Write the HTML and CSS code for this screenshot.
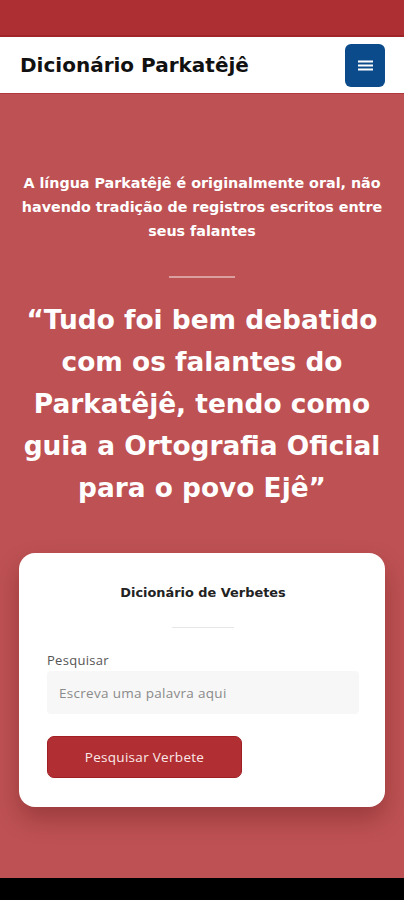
FILE: index.html
```html
<!DOCTYPE html>
<html lang="pt">
<head>
<meta charset="utf-8">
<meta name="viewport" content="width=device-width, initial-scale=1">
<title>Dicionário Parkatêjê</title>
<link rel="stylesheet" href="styles.css">
</head>
<body>
<div class="screen">
  <div class="statusbar"></div>
  <header class="nav">
    <div class="brand">Dicionário Parkatêjê</div>
    <button class="menu-btn" aria-label="Menu">
      <svg width="15" height="11" viewBox="0 0 15 11">
        <rect x="0" y="0.5" width="15" height="2" fill="#ffffff"/>
        <rect x="0" y="4.5" width="15" height="2" fill="#ffffff"/>
        <rect x="0" y="8.5" width="15" height="2" fill="#ffffff"/>
      </svg>
    </button>
  </header>
  <main class="hero">
    <p class="intro">A língua Parkatêjê é originalmente oral, não havendo tradição de registros escritos entre seus falantes</p>
    <div class="divider"></div>
    <h1 class="quote">“Tudo foi bem debatido com os falantes do Parkatêjê, tendo como guia a Ortografia Oficial para o povo Ejê”</h1>
    <section class="card">
      <h2 class="card-title">Dicionário de Verbetes</h2>
      <div class="card-divider"></div>
      <label class="label" for="q">Pesquisar</label>
      <input class="input" id="q" type="text" placeholder="Escreva uma palavra aqui">
      <button class="search-btn">Pesquisar Verbete</button>
    </section>
  </main>
  <div class="navbar-bottom"></div>
</div>
</body>
</html>
```
FILE: styles.css
```css
* { box-sizing: border-box; }
html, body { margin: 0; padding: 0; }
body {
  background: #000;
  font-family: "DejaVu Sans", sans-serif;
}
.screen {
  width: 404px;
  height: 900px;
  display: flex;
  flex-direction: column;
  background: #be5153;
  overflow: hidden;
}
.statusbar {
  height: 37px;
  background: #ad2f34;
  border-bottom: 2px solid #9f2529;
  flex: none;
}
.nav {
  flex: none;
  height: 57px;
  background: #ffffff;
  border-bottom: 1px solid #b03a3e;
  display: flex;
  align-items: center;
  justify-content: space-between;
  padding: 0 19px 0 20px;
}
.brand {
  font-family: "DejaVu Sans", sans-serif;
  font-weight: bold;
  font-size: 20px;
  color: #111;
}
.menu-btn {
  width: 40px;
  height: 43px;
  border: none;
  border-radius: 6px;
  background: #0b4b8b;
  display: flex;
  align-items: center;
  justify-content: center;
  padding: 0;
}
.hero {
  flex: 1;
  display: flex;
  flex-direction: column;
  align-items: center;
  padding: 77px 10px 0 10px;
}
.intro {
  margin: 0;
  color: #fff;
  font-weight: bold;
  font-size: 14.3px;
  line-height: 24px;
  text-align: center;
}
.divider {
  width: 66px;
  height: 2px;
  background: rgba(255,255,255,0.45);
  margin-top: 33px;
}
.quote {
  margin: 21px 0 0 0;
  padding: 0 9px;
  color: #fff;
  font-weight: bold;
  font-size: 26.4px;
  line-height: 42px;
  text-align: center;
}
.card {
  margin-top: 44px;
  width: 366px;
  background: #fff;
  border-radius: 16px;
  box-shadow: 0 12px 24px rgba(60, 0, 0, 0.28);
  padding: 31px 26px 29px 28px;
  display: flex;
  flex-direction: column;
  align-items: flex-start;
}
.card-title {
  align-self: center;
  margin: 0;
  font-size: 12.9px;
  line-height: 18px;
  font-weight: bold;
  color: #222;
}
.card-divider {
  align-self: center;
  width: 62px;
  height: 1px;
  background: #e6e6e6;
  margin-top: 25px;
}
.label {
  margin-top: 24px;
  font-family: "Open Sans", sans-serif;
  font-size: 13px;
  letter-spacing: 0.3px;
  line-height: 17px;
  color: #555;
}
.input {
  margin-top: 2px;
  width: 312px;
  height: 43px;
  border: none;
  border-radius: 4px;
  background: #f7f7f7;
  padding: 0 12px;
  font-family: "Open Sans", sans-serif;
  font-size: 13.5px;
  letter-spacing: 0.3px;
  color: #333;
  outline: none;
}
.input::placeholder { color: #8a8a8a; }
.search-btn {
  margin-top: 22px;
  width: 195px;
  height: 42px;
  border: 1px solid #a01f24;
  border-radius: 7px;
  background: #b12e32;
  color: #fbe9e9;
  font-family: "Open Sans", sans-serif;
  font-size: 13.5px;
  letter-spacing: 0.3px;
}
.navbar-bottom {
  flex: none;
  height: 22px;
  background: #000;
}
```
